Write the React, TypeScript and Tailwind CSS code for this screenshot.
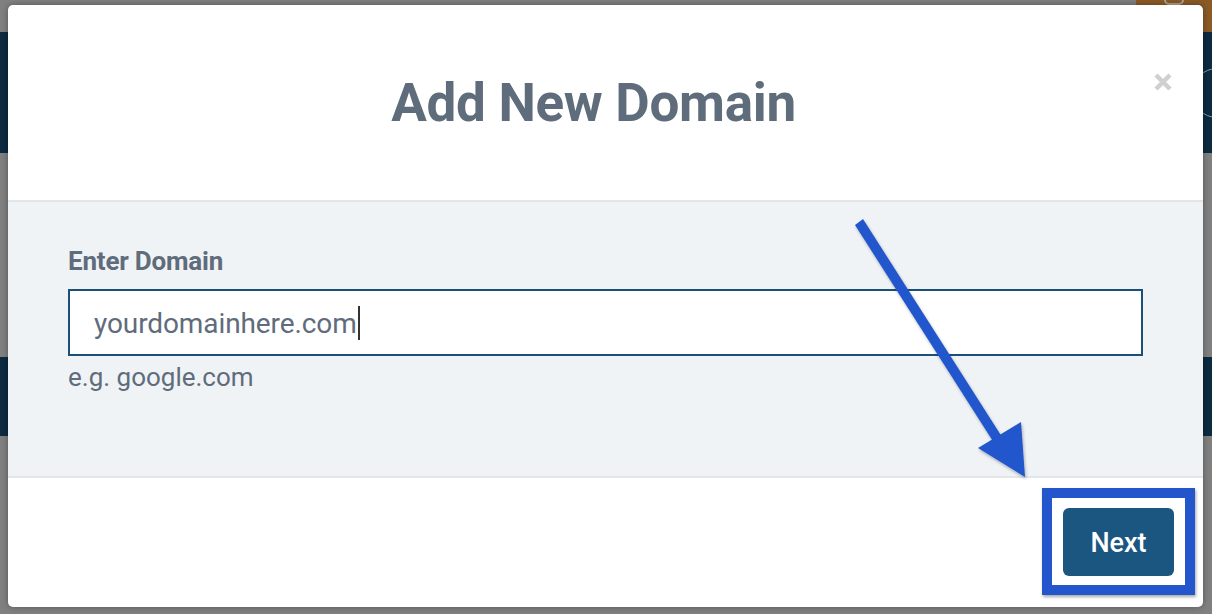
import React from "react";

export default function App() {
  return (
    <div className="relative w-[1212px] h-[614px] overflow-hidden bg-[#808080]" style={{ fontFamily: "Roboto, 'Liberation Sans', sans-serif" }}>
      {/* dimmed background page */}
      <div className="flex flex-col w-full h-full">
        <div className="h-[32px] flex justify-end">
          <div className="w-[76px] h-full bg-[#8a5a27] flex justify-center">
            <div className="w-[20px] h-[10px] -mt-[5px] rounded-full border-2 border-[#b0a090]" />
          </div>
        </div>
        <div className="h-[121px] bg-[#0c2a40] flex justify-end items-center">
          <div className="w-[50px] h-[50px] -mr-[30px] rounded-full border border-[#8a9aa8]" />
        </div>
        <div className="h-[204px]" />
        <div className="h-[79px] bg-[#0c2a40]" />
        <div className="flex-1" />
      </div>

      {/* modal */}
      <div className="absolute left-[8px] top-[5px] w-[1195px] h-[602px] bg-white rounded-[5px] shadow-[0_0_6px_rgba(0,0,0,0.35)] flex flex-col overflow-hidden">
        <div className="h-[195px] grid grid-cols-[1fr_auto_1fr] items-center">
          <div />
          <h1 className="text-[53px] font-bold text-[#5f6c7b] tracking-[-0.3px] pt-[2px] mr-[24px]">Add New Domain</h1>
          <div className="flex justify-end pr-[30px] pb-[42px]">
            <svg width="20" height="20" viewBox="0 0 20 20">
              <path d="M3 3 L17 17 M17 3 L3 17" stroke="#d0d0d0" strokeWidth="4.5" strokeLinecap="butt" />
            </svg>
          </div>
        </div>
        <div className="h-[278px] bg-[#f0f3f6] border-y-2 border-[#e3e6e9] px-[60px] pt-[44px] flex flex-col">
          <label className="text-[26px] font-bold text-[#5f6c7b] leading-[30px] tracking-[-0.2px]">Enter Domain</label>
          <div className="mt-[13px] h-[67px] bg-white border-2 border-[#1b4f77] flex items-center pl-[24px]">
            <span className="text-[28px] text-[#5f6c7b] leading-none tracking-[-0.1px] pt-[3px]">yourdomainhere.com</span>
            <span className="w-[2px] h-[34px] bg-[#333] ml-[1px]" />
          </div>
          <div className="mt-[6px] text-[26px] text-[#5f6c7b] leading-[30px]">e.g. google.com</div>
        </div>
        <div className="flex-1 flex justify-end items-start pt-[30px] pr-[29px]">
          <button className="w-[111px] h-[68px] bg-[#1b5680] rounded-[6px] text-white text-[27px] font-medium pt-[2px]">Next</button>
        </div>
      </div>

      {/* annotation: highlight box */}
      <div className="absolute left-[1042px] top-[488px] w-[153px] h-[107px] border-[10px] border-[#2356cc] shadow-[1px_2px_3px_rgba(0,0,0,0.35)]" />

      {/* annotation: arrow */}
      <svg className="absolute left-0 top-0 pointer-events-none" width="1212" height="614" viewBox="0 0 1212 614">
        <defs>
          <filter id="sh" x="-20%" y="-20%" width="140%" height="140%">
            <feDropShadow dx="1" dy="2" stdDeviation="1.5" floodColor="#000" floodOpacity="0.3" />
          </filter>
        </defs>
        <g filter="url(#sh)" fill="#2356cc">
          <polygon points="855,225 863,219 1004,440 996,446" />
          <polygon points="978,448 1021,422 1025,477" />
        </g>
      </svg>
    </div>
  );
}
